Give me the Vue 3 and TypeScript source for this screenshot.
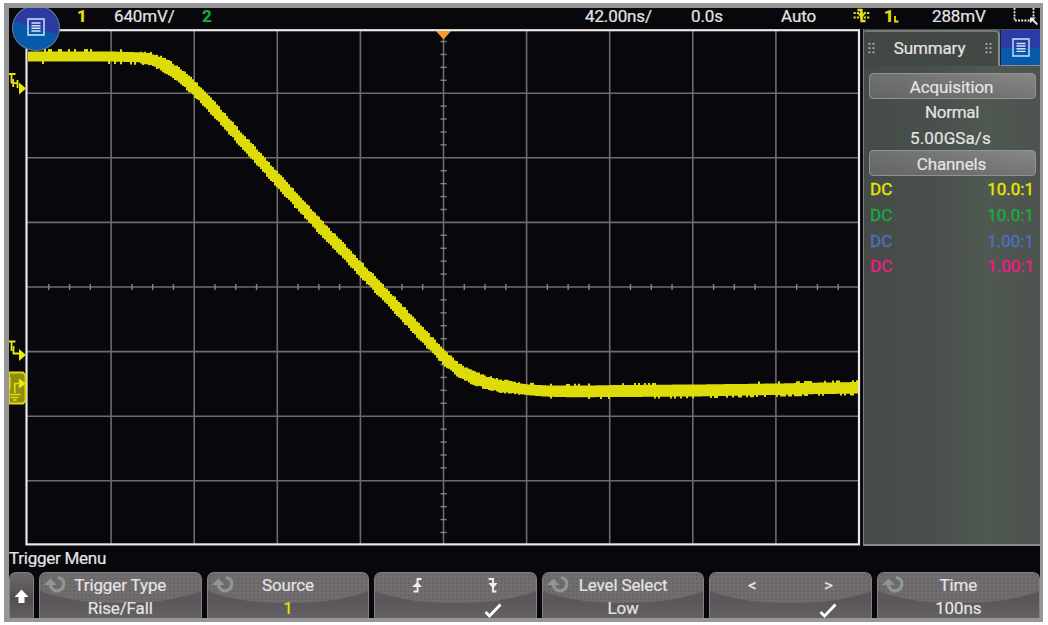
<script setup lang="ts">
interface SoftKey {
  title?: string
  value?: string
  knob?: boolean
  yellow?: boolean
  kind?: 'edge' | 'level'
}

const keys: SoftKey[] = [
  { title: 'Trigger Type', value: 'Rise/Fall', knob: true },
  { title: 'Source', value: '1', knob: true, yellow: true },
  { kind: 'edge' },
  { title: 'Level Select', value: 'Low', knob: true },
  { kind: 'level' },
  { title: 'Time', value: '100ns', knob: true },
]

const channels = [
  { coupling: 'DC', ratio: '10.0:1', color: 'c1' },
  { coupling: 'DC', ratio: '10.0:1', color: 'c2' },
  { coupling: 'DC', ratio: '1.00:1', color: 'c3' },
  { coupling: 'DC', ratio: '1.00:1', color: 'c4' },
]

// Graticule geometry, in screen pixels
const cx = 443.5
const cy = 287
const dx = 83.1
const dy = 64.6
const vLines = [-4, -3, -2, -1, 0, 1, 2, 3, 4].map((i) => cx + i * dx)
const hLines = [-3, -2, -1, 0, 1, 2, 3].map((i) => cy + i * dy)
const hTicks: number[] = []
for (let i = -19; i < 20; i++) if (i % 4 !== 0) hTicks.push(cx + (i * dx) / 4)
const vTicks: number[] = []
for (let i = -19; i < 20; i++) if (i % 5 !== 0) vTicks.push(cy + (i * dy) / 5)

// Trace centre line: x, y, half thickness
const pts: [number, number, number][] = [
  [28, 56.5, 5], [110, 56.5, 5], [138, 57.3, 5], [150, 59.5, 5.8], [160, 63.5, 6.3],
  [170, 69, 6.8], [180, 76.5, 7], [195, 90, 7.3], [213, 109, 7.3], [245, 145, 7.3],
  [277, 180.5, 7.3], [320, 227.5, 7.3], [370, 280, 7.3], [403, 315, 7.3], [423, 336.5, 7.3],
  [443, 357.5, 7], [456, 369, 6.5], [470, 377, 6.2], [485, 382.5, 6], [500, 386, 5.8],
  [526, 389.7, 5.4], [545, 391, 5.6], [570, 391.5, 5.8], [620, 391, 6], [693, 390.5, 6],
  [776, 389.2, 5.7], [820, 388.3, 5.7], [858, 387.8, 5.8],
]

function noise(n: number): number {
  const v = Math.sin(n * 127.1) * 43758.5453
  return v - Math.floor(v)
}

const topSpikes = [45, 48, 50, 58, 61, 68, 75, 84, 86, 91, 120]
const bottomSpikes = [42, 108, 115, 121, 130, 135]

function buildTrace(): string {
  const upper: string[] = []
  const lower: string[] = []
  let k = 0
  for (let x = 28; x < 858; x += 2) {
    while (k < pts.length - 2 && x > pts[k + 1][0]) k++
    const [x0, y0, h0] = pts[k]
    const [x1, y1, h1] = pts[k + 1]
    const t = (x - x0) / (x1 - x0)
    const y = y0 + (y1 - y0) * t
    const h = h0 + (h1 - h0) * t
    let up = y - h
    let dn = y + h
    if (x < 140) {
      if (topSpikes.some((s) => s >= x && s < x + 2)) up -= 2.5
      if (bottomSpikes.some((s) => s >= x && s < x + 2)) dn += 2.5
    } else if (x < 520) {
      up -= noise(x) * 2 - 0.4
      dn += noise(x + 7) * 2 - 0.4
    } else {
      if ((x < 655 || x > 790) && noise(x) > 0.7) up -= 1.8
      if (x > 545 && noise(x + 3) > (x < 665 ? 0.85 : x < 800 ? 0.5 : 0.75)) dn += 1.8
      if (x > 740 && x < 785 && noise(x + 9) > 0.9) up -= 2.3
    }
    upper.push(`${x},${up.toFixed(1)} ${x + 2},${up.toFixed(1)}`)
    lower.unshift(`${x + 2},${dn.toFixed(1)} ${x},${dn.toFixed(1)}`)
  }
  return upper.join(' ') + ' ' + lower.join(' ')
}
const trace = buildTrace()
</script>

<template>
  <div class="page">
    <div class="scope">
      <div class="topbar">
        <b class="c1">1</b>
        <span>640mV/</span>
        <b class="c2">2</b>
        <span>42.00ns/</span>
        <span>0.0s</span>
        <span>Auto</span>
        <svg class="trig" width="18" height="16" viewBox="0 0 18 16">
          <path d="M0.5 5H17M0.5 9.5H17" stroke="#e4e01a" stroke-width="1.8" stroke-dasharray="2.2 1.2" />
          <path d="M4.5 2H8.5V13H12.5" fill="none" stroke="#e4e01a" stroke-width="2.4" />
          <path d="M4.5 5.5H12.5L8.5 10.5Z" fill="#e4e01a" />
        </svg>
        <b class="c1 one">1<svg width="5" height="7" viewBox="0 0 5 7"><path d="M1 0V5.5H4.5" fill="none" stroke="#e8e600" stroke-width="1.8" /></svg></b>
        <span>288mV</span>
        <svg class="zone" width="26" height="18" viewBox="0 0 26 18">
          <path d="M1.5 0V12.5H17M20.5 0V9" fill="none" stroke="#e6e6e6" stroke-width="1.8" stroke-dasharray="2 1.2" />
          <path d="M17 9.5H23L20.8 11.6L25 16L23.6 17L19.3 13L17 15.2Z" fill="#eee" />
        </svg>
      </div>

      <div class="main">
        <svg class="plot" width="854" height="517" viewBox="9 29 854 517">
          <g stroke="#70696d" stroke-width="1.6">
            <line v-for="x in vLines" :key="'v' + x" :x1="x" :x2="x" y1="31" y2="544" />
            <line v-for="y in hLines" :key="'h' + y" x1="27" x2="859" :y1="y" :y2="y" />
          </g>
          <g stroke="#898287" stroke-width="1.4">
            <line v-for="x in hTicks" :key="'ht' + x" :x1="x" :x2="x" :y1="cy - 3" :y2="cy + 3" />
            <line v-for="y in vTicks" :key="'vt' + y" :x1="cx - 3" :x2="cx + 3" :y1="y" :y2="y" />
          </g>
          <rect x="26.5" y="30.2" width="832.5" height="514.2" fill="none" stroke="#e9e7e8" stroke-width="2.2" />
          <polygon :points="trace" fill="#dedc08" />
          <path d="M436 31H451L443.5 39.5Z" fill="#f79a2c" />
          <g fill="none" stroke="#ece90a" stroke-width="1.8">
            <path d="M8.5 74H15.5M11.5 74V83.5" />
            <path d="M13.2 79V87M13.2 83.2H17.5M17.5 80V88" />
            <path d="M8.5 341.5H15.5M11.5 341.5V351" />
            <path d="M13.5 346V353.5H19" />
          </g>
          <path d="M19 82.5L26 88.5L19 94.5Z" fill="#ece90a" />
          <path d="M19 349L26 355L19 361Z" fill="#ece90a" />
          <path d="M9 372.5H23L25.5 375.5V401L23 403.5H9Z" fill="#8f8d12" stroke="#dedc08" stroke-width="1.8" />
          <path d="M9.8 377V389M14.8 393V383.5H20M8.5 394.5H21M11 397.5H18.5" fill="none" stroke="#dedc08" stroke-width="1.7" />
          <path d="M19 378.5L26 383.5L19 388.5Z" fill="#ece90a" />
          <path d="M13.3 400H16.5" stroke="#dedc08" stroke-width="1.6" />
        </svg>

        <div class="side">
          <div class="tabs">
            <div class="tab">
              <svg width="8" height="12" viewBox="0 0 8 12"><path d="M1.5 1V12M5.5 1V12" stroke="#b8bbb8" stroke-width="1.8" stroke-dasharray="1.8 2.4" /></svg>
              <span>Summary</span>
              <svg width="8" height="12" viewBox="0 0 8 12"><path d="M1.5 1V12M5.5 1V12" stroke="#b8bbb8" stroke-width="1.8" stroke-dasharray="1.8 2.4" /></svg>
            </div>
            <div class="bluebtn">
              <svg width="18" height="19" viewBox="0 0 18 19"><path d="M1 1H17V18H1ZM4.5 5.5H13.5M4.5 8H13.5M4.5 10.7H13.5M4.5 13.4H13.5" fill="none" stroke="#cfe2f8" stroke-width="1.4" /></svg>
            </div>
          </div>
          <div class="bar">Acquisition</div>
          <div class="line normal">Normal</div>
          <div class="line">5.00GSa/s</div>
          <div class="bar">Channels</div>
          <div v-for="c in channels" :key="c.color" class="chan" :class="c.color">
            <span>{{ c.coupling }}</span><span>{{ c.ratio }}</span>
          </div>
        </div>
      </div>

      <div class="menu-title">Trigger Menu</div>
      <div class="keys">
        <div class="key up">
          <svg width="15" height="15" viewBox="0 0 15 15"><path d="M7.5 .5L14.5 8H10.5V14H4.5V8H.5Z" fill="#fff" /></svg>
        </div>
        <div v-for="(k, i) in keys" :key="i" class="key">
          <div class="gloss"></div>
          <svg v-if="k.knob" class="knob" width="23" height="20" viewBox="0 0 23 20">
            <path d="M14 2.5C18.5 3.5 20.5 6.5 19.8 10C19 15 13 17.5 9 14.5C7.2 13 6.5 11 6.5 9" fill="none" stroke="#8f9890" stroke-width="3.2" />
            <path d="M0 10L6.5 3.5L12.5 10Z" fill="#8f9890" />
          </svg>
          <template v-if="k.title">
            <div class="t1">{{ k.title }}</div>
            <div class="t2" :class="{ c1: k.yellow }">{{ k.value }}</div>
          </template>
          <div v-else class="pair">
            <div class="cell">
              <svg v-if="k.kind === 'edge'" width="12" height="17" viewBox="0 0 12 17"><path d="M10.5 2H6.5V14.5H2.5" fill="none" stroke="#eee" stroke-width="1.9" /><path d="M1 10L6.5 5L11 10Z" fill="#eee" /></svg>
              <span v-else>&lt;</span>
            </div>
            <div class="cell">
              <svg v-if="k.kind === 'edge'" width="12" height="17" viewBox="0 0 12 17"><path d="M1.5 2H6V14.5H9.5" fill="none" stroke="#eee" stroke-width="1.9" /><path d="M1.5 6L6 11.5L10.5 6Z" fill="#eee" /></svg>
              <span v-else>&gt;</span>
            </div>
            <div></div>
            <div class="cell check">
              <svg width="18" height="15" viewBox="0 0 18 15"><path d="M1.5 9L5.5 13L16.5 1.5" fill="none" stroke="#fff" stroke-width="2.8" /></svg>
            </div>
          </div>
        </div>
      </div>

      <div class="badge">
        <svg width="18" height="18" viewBox="0 0 18 18"><path d="M1 1H17V17H1ZM4.5 5H13.5M4.5 7.7H13.5M4.5 10.3H13.5M4.5 13H13.5" fill="none" stroke="#d5e6fa" stroke-width="1.4" /></svg>
      </div>
    </div>
  </div>
</template>

<style>
body { background: #fff; overflow: hidden; }
</style>

<style scoped>
* { box-sizing: border-box; }
svg { display: block; flex: none; }
.page {
  width: 1048px; height: 625px; padding: 3px 5px 3px 4px; background: #fff;
  font-family: Roboto, "Liberation Sans", sans-serif; font-size: 17px; color: #e4e4e4;
  letter-spacing: -.12px; -webkit-text-stroke: .2px;
}
.scope {
  position: relative; display: flex; flex-direction: column; width: 1039px; height: 619px;
  border: solid #979797; border-width: 5px 3px 4px 5px; background: #08080c; overflow: hidden;
}
.topbar {
  height: 21px; flex: none; display: grid; padding-left: 68px; line-height: 17px; white-space: nowrap;
  grid-template-columns: 37px 88px 383px 106px 90px 72px 31px 48px 81px 27px;
}
.one { display: flex; align-items: flex-end; height: 17px; }
.one svg { margin: 0 0 2px 0; }
.c1 { color: #e8e600; }
.c2 { color: #16ac3c; }
.c3 { color: #4b70c2; }
.c4 { color: #ee1c83; }
.main { display: flex; height: 517px; flex: none; }
.plot { flex: none; }
.side {
  width: 177px; height: 517px; padding: 1px 0 0; border-left: 1px solid #7b807c; border-bottom: 2px solid #858b85;
  background: linear-gradient(90deg, #454b47 0, #4a514c 45%, #505852 70%, #4c534e 100%); line-height: 26px;
}
.tabs { display: flex; height: 36px; }
.tab {
  width: 136px; height: 36px; display: flex; align-items: center; justify-content: space-between;
  padding: 0 5px 3px 4px; border-top: 2px solid #747a75; border-right: 2px solid #858a86; border-radius: 3px 5px 0 0;
  background: #424844;
}
.tab span { position: relative; left: -1px; }
.bluebtn {
  flex: 1; display: flex; align-items: center; justify-content: center; border-left: 1px solid #222;
  border-bottom: 1px solid #8b918c; background: linear-gradient(#2b3ca8 0 50%, #075aaa 51% 100%);
}
.bar {
  height: 26px; margin: 7px 4px 0 5px; border: 1px solid #919391; border-radius: 4px; line-height: 26px;
  text-align: center; padding-right: 2px;
  background: linear-gradient(100deg, rgba(95,97,95,.6), rgba(145,145,145,.2)), linear-gradient(#858685, #6c6d6c);
}
.line { height: 25.5px; padding-right: 3px; text-align: center; letter-spacing: .1px; }
.normal { padding-right: 0; letter-spacing: -.3px; }
.line + .bar { margin-top: 0; }
.chan { display: flex; justify-content: space-between; height: 25.8px; padding: 0 6px 0 6px; line-height: 27px; letter-spacing: 0; -webkit-text-stroke: .4px; }
.menu-title { height: 26px; flex: none; line-height: 25px; letter-spacing: -.25px; }
.keys { flex: none; display: flex; gap: 5px; height: 47px; }
.key {
  position: relative; width: 162.6px; height: 47px; flex: none; overflow: hidden; border-radius: 7px 7px 2px 2px;
  border: 1px solid #858083; border-bottom: 0; text-align: center;
  background: linear-gradient(#605c5e, #5b5659 60%, #666164);
}
.key.up { width: 25px; display: flex; align-items: center; justify-content: center; background: linear-gradient(#6b686a, #514d50 55%, #646063); }
.gloss {
  position: absolute; inset: -28px -12px auto -12px; height: 58px; border-radius: 50%/42%;
  background: radial-gradient(circle, rgba(50,48,50,.16) 0 .7px, transparent 1px) 0 0/4px 4px, #716d6f;
}
.knob { position: absolute; left: 4px; top: 2px; }
.t1, .t2 { position: relative; line-height: 23px; height: 23px; white-space: nowrap; }
.t1 { margin-top: 1px; }
.pair { position: relative; display: grid; grid-template-columns: 76px 76px; grid-template-rows: 24px 22px; margin-left: 4px; }
.cell { display: flex; align-items: center; justify-content: center; }
.check { align-items: flex-end; padding-bottom: 1px; }
.badge {
  position: absolute; left: 3px; top: -3px; width: 48px; height: 46px; border-radius: 50%; border: 1px solid #6c7d96;
  display: flex; align-items: center; justify-content: center; padding-bottom: 2px;
  background: conic-gradient(from 0deg at 50% 50%, #2b3ba2 0 105deg, #075aa9 110deg 285deg, #2b3ba2 290deg);
}
</style>
